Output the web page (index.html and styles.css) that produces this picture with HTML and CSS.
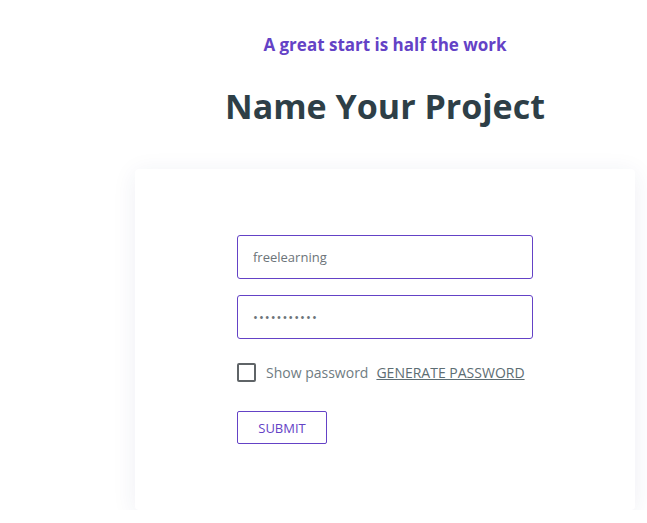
FILE: index.html
```html
<!DOCTYPE html>
<html lang="en">
<head>
    <meta charset="UTF-8">
    <meta name="viewport" content="width=device-width, initial-scale=1.0">
    <title>Name Your Project</title>
    <link rel="stylesheet" href="styles.css">
</head>
<body>
    <div class="page">
        <p class="tagline">A great start is half the work</p>
        <h1>Name Your Project</h1>

        <div class="card">
            <form class="project-form">
                <input type="text" class="field" name="project" value="freelearning">
                <input type="password" class="field secret" name="password" value="freelearnin">

                <div class="options">
                    <label class="show-pass"><input type="checkbox" name="show"> Show password</label>
                    <a href="#" class="generate">GENERATE PASSWORD</a>
                </div>

                <button type="button" class="submit">SUBMIT</button>
            </form>
        </div>
    </div>
</body>
</html>
```

FILE: styles.css
```css
body {
    margin: 0;
    padding: 0;
    font-family: "Open Sans", "Noto Sans", sans-serif;
    background-color: #ffffff;
}

.page {
    width: 500px;
    margin-left: 135px;
    padding-top: 33px;
}

.tagline {
    margin: 0;
    text-align: center;
    color: #6442c6;
    font-size: 17px;
    font-weight: 700;
    line-height: 24px;
}

h1 {
    margin: 26px 0 0;
    text-align: center;
    color: #2e3f47;
    font-size: 34px;
    font-weight: 700;
    line-height: 46px;
}

.card {
    margin-top: 40px;
    background-color: white;
    border-radius: 4px;
    box-shadow: 0 4px 24px rgba(40, 50, 110, 0.08);
    padding: 66px 0 66px;
}

.project-form {
    width: 296px;
    margin: 0 auto;
    display: flex;
    flex-direction: column;
}

.field {
    height: 44px;
    padding: 0 15px;
    margin-bottom: 16px;
    box-sizing: border-box;
    border: 1px solid #6442c6;
    border-radius: 3px;
    font-family: inherit;
    font-size: 13px;
    color: #6c7479;
    outline: none;
}

.secret {
    letter-spacing: 1px;
}

.options {
    display: flex;
    align-items: center;
    gap: 8px;
    margin-top: 8px;
}

.show-pass {
    display: flex;
    align-items: center;
    gap: 10px;
    font-size: 14px;
    color: #6f7c82;
}

.show-pass input {
    appearance: none;
    width: 19px;
    height: 19px;
    margin: 0;
    border: 2px solid #5f6467;
    border-radius: 2px;
    box-sizing: border-box;
}

.generate {
    font-size: 14px;
    color: #5d6d73;
    text-decoration: underline;
}

.submit {
    align-self: flex-start;
    margin-top: 29px;
    width: 90px;
    height: 33px;
    background-color: white;
    color: #6442c6;
    border: 1px solid #6442c6;
    border-radius: 2px;
    font-family: inherit;
    font-size: 13px;
    cursor: pointer;
}
```
